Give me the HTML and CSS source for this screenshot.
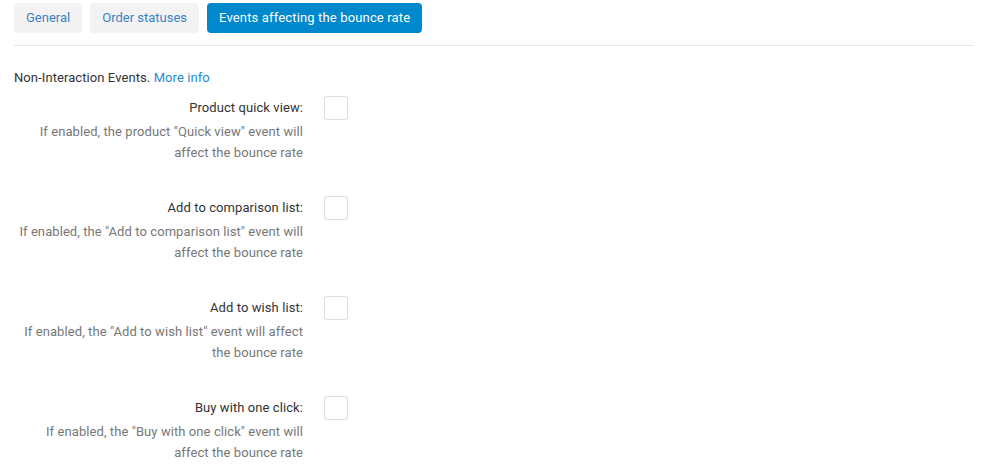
FILE: index.html
```html
<!DOCTYPE html>
<html>
<head>
<meta charset="utf-8">
<link rel="stylesheet" href="styles.css">
</head>
<body>
<div class="page">
  <nav class="tabs">
    <a class="tab">General</a>
    <a class="tab">Order statuses</a>
    <a class="tab active">Events affecting the bounce rate</a>
  </nav>
  <div class="intro">Non-Interaction Events. <a class="link">More info</a></div>
  <div class="rows">
    <div class="row">
      <div class="labels">
        <div class="label">Product quick view:</div>
        <div class="desc">If enabled, the product "Quick view" event will affect the bounce rate</div>
      </div>
      <span class="check"></span>
    </div>
    <div class="row">
      <div class="labels">
        <div class="label">Add to comparison list:</div>
        <div class="desc">If enabled, the "Add to comparison list" event will affect the bounce rate</div>
      </div>
      <span class="check"></span>
    </div>
    <div class="row">
      <div class="labels">
        <div class="label">Add to wish list:</div>
        <div class="desc">If enabled, the "Add to wish list" event will affect the bounce rate</div>
      </div>
      <span class="check"></span>
    </div>
    <div class="row">
      <div class="labels">
        <div class="label">Buy with one click:</div>
        <div class="desc">If enabled, the "Buy with one click" event will affect the bounce rate</div>
      </div>
      <span class="check"></span>
    </div>
  </div>
</div>
</body>
</html>
```
FILE: styles.css
```css
html, body { margin: 0; padding: 0; background: #fff; }
body { font-family: Roboto, "Liberation Sans", sans-serif; font-size: 13px; color: #333; letter-spacing: 0.08px; }
.page { padding: 3px 20px 0 14px; }
.tabs {
  display: flex; gap: 8px;
  padding-bottom: 12px;
  border-bottom: 1px solid #e3e8ee;
}
.tab {
  display: block; height: 30px; line-height: 30px;
  padding: 0 12px; border-radius: 4px; letter-spacing: 0;
  background: #f3f3f3; color: #3b82c4; cursor: pointer;
}
.tab.active { background: #0088cc; color: #fff; letter-spacing: 0.15px; }
.intro { margin-top: 23px; line-height: 18px; color: #333; }
.link { color: #1f8ad2; }
.rows { margin-top: 9px; }
.row { display: flex; align-items: flex-start; gap: 21px; height: 100px; }
.labels { width: 289px; text-align: right; }
.label { line-height: 20px; padding-top: 2px; color: #333; }
.desc { line-height: 20.5px; margin-top: 4px; color: #777; }
.check {
  display: block; width: 22px; height: 22px;
  border: 1px solid #ddd; border-radius: 3px; background: #fff;
}
```
